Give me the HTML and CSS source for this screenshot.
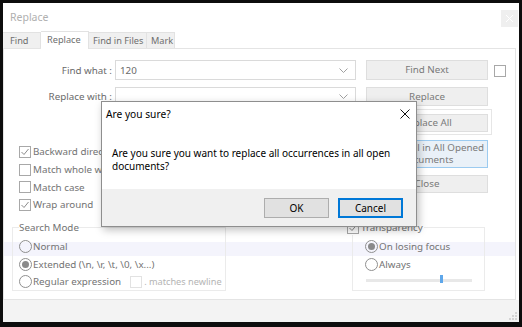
FILE: index.html
```html
<!DOCTYPE html>
<html lang="en">
<head>
    <meta charset="UTF-8">
    <title>Replace</title>
    <link rel="stylesheet" href="styles.css">
</head>
<body>

    <!-- Janela principal (esmaecida) -->
    <div class="window">
        <div class="titlebar">
            <span class="title">Replace</span>
            <span class="win-close">
                <svg width="7" height="7" viewBox="0 0 7 7"><path d="M0 0L7 7M7 0L0 7" stroke="#fff" stroke-width="1"/></svg>
            </span>
        </div>

        <div class="tabs">
            <span class="tab t-find">Find</span>
            <span class="tab t-replace active">Replace</span>
            <span class="tab t-files">Find in Files</span>
            <span class="tab t-mark">Mark</span>
        </div>

        <div class="panel">
            <div class="top">
                <div class="form">
                    <div class="field">
                        <label>Find what :</label>
                        <div class="combo">
                            <span>120</span>
                            <svg class="chev" width="9" height="5" viewBox="0 0 9 5"><path d="M0.5 0.5L4.5 4.5L8.5 0.5" fill="none" stroke="#a0a0a0"/></svg>
                        </div>
                    </div>
                    <div class="field field-2">
                        <label>Replace with :</label>
                        <div class="combo">
                            <span></span>
                            <svg class="chev" width="9" height="5" viewBox="0 0 9 5"><path d="M0.5 0.5L4.5 4.5L8.5 0.5" fill="none" stroke="#a0a0a0"/></svg>
                        </div>
                    </div>

                    <div class="options">
                        <div class="chk-row"><span class="chk on"><svg width="10" height="10" viewBox="0 0 10 10"><path d="M1.5 5L4 7.5L8.5 2" fill="none" stroke="#8c8c8c"/></svg></span>Backward direction</div>
                        <div class="chk-row"><span class="chk"></span>Match whole word only</div>
                        <div class="chk-row"><span class="chk"></span>Match case</div>
                        <div class="chk-row"><span class="chk on"><svg width="10" height="10" viewBox="0 0 10 10"><path d="M1.5 5L4 7.5L8.5 2" fill="none" stroke="#8c8c8c"/></svg></span>Wrap around</div>
                    </div>
                </div>

                <div class="buttons">
                    <div class="btn b-next">Find Next</div>
                    <div class="btn b-replace">Replace</div>
                    <div class="btn-frame">
                        <div class="btn b-all">Replace All</div>
                    </div>
                    <div class="btn b-opened">Replace All in All Opened<br>Documents</div>
                    <div class="btn b-close">Close</div>
                </div>

                <span class="chk side"></span>
            </div>

            <div class="bottom">
                <fieldset class="group mode">
                    <legend>Search Mode</legend>
                    <div class="radio-row"><span class="radio"></span>Normal</div>
                    <div class="radio-row"><span class="radio on"></span>Extended (\n, \r, \t, \0, \x...)</div>
                    <div class="radio-row"><span class="radio"></span>Regular expression<span class="chk newline"></span><span class="dim">. matches newline</span></div>
                </fieldset>

                <fieldset class="group transp">
                    <legend><span class="chk on"><svg width="10" height="10" viewBox="0 0 10 10"><path d="M1.5 5L4 7.5L8.5 2" fill="none" stroke="#8c8c8c"/></svg></span>Transparency</legend>
                    <div class="radio-row"><span class="radio on"></span>On losing focus</div>
                    <div class="radio-row"><span class="radio"></span>Always</div>
                    <div class="slider"><span class="thumb"></span></div>
                </fieldset>
            </div>
        </div>

        <div class="status">
            <svg class="grip" width="8" height="8" viewBox="0 0 8 8">
                <rect x="6" y="0" width="2" height="2" fill="#d4d4d4"/>
                <rect x="3" y="3" width="2" height="2" fill="#d4d4d4"/>
                <rect x="6" y="3" width="2" height="2" fill="#d4d4d4"/>
                <rect x="0" y="6" width="2" height="2" fill="#d4d4d4"/>
                <rect x="3" y="6" width="2" height="2" fill="#d4d4d4"/>
                <rect x="6" y="6" width="2" height="2" fill="#d4d4d4"/>
            </svg>
        </div>
    </div>

    <!-- Caixa de confirmação -->
    <div class="dialog">
        <div class="dlg-title">
            <span>Are you sure?</span>
            <svg class="dlg-x" width="10" height="10" viewBox="0 0 10 10"><path d="M0.5 0.5L9.5 9.5M9.5 0.5L0.5 9.5" stroke="#111" stroke-width="1"/></svg>
        </div>
        <div class="dlg-body">
            Are you sure you want to replace all occurrences in all open<br>documents?
        </div>
        <div class="dlg-footer">
            <div class="dlg-btn">OK</div>
            <div class="dlg-btn default">Cancel</div>
        </div>
    </div>

</body>
</html>
```

FILE: styles.css
```css
* {
    margin: 0;
    padding: 0;
    box-sizing: border-box;
    font-family: 'Noto Sans', sans-serif;
}

body {
    background-color: #0d0d0d;
    width: 522px;
    height: 327px;
    overflow: hidden;
}

/* Janela principal */
.window {
    margin: 3px 0 0 3px;
    width: 516px;
    height: 319px;
    background-color: #ffffff;
    display: flex;
    flex-direction: column;
    font-size: 9.8px;
    color: #737373;
}

.titlebar {
    height: 28px;
    display: flex;
    justify-content: space-between;
    align-items: flex-start;
}

.title {
    margin: 7px 0 0 7px;
    font-size: 10.5px;
    line-height: 14px;
    color: #b0b0b0;
}

.win-close {
    width: 17px;
    height: 17px;
    margin: 7px 1px 0 0;
    background-color: #efefef;
    display: flex;
    align-items: center;
    justify-content: center;
}

.tabs {
    height: 17px;
    display: flex;
    align-items: flex-end;
    position: relative;
    z-index: 1;
}

.tab {
    height: 16px;
    background-color: #f0f0f0;
    border: 1px solid #e2e2e2;
    border-bottom: none;
    border-left: none;
    line-height: 15px;
    font-size: 9.2px;
    color: #6e6e6e;
    white-space: nowrap;
    overflow: hidden;
}

.t-find { width: 38px; padding-left: 7px; }
.t-replace { width: 48px; padding-left: 6px; }
.t-files { width: 58px; padding-left: 4px; }
.t-mark { width: 28px; padding-left: 4px; }

.tab.active {
    height: 18px;
    margin-bottom: -1px;
    background-color: #ffffff;
    line-height: 16px;
}

.panel {
    height: 252px;
    margin-right: 3px;
    border: 1px solid #e4e4e4;
    background: linear-gradient(to bottom, #fff 193px, #f4f4fc 193px, #f4f4fc 207px, #fff 207px);
}

.top {
    display: flex;
    align-items: flex-start;
    padding-top: 11px;
}

.form {
    width: 352px;
}

.field {
    display: flex;
    height: 20px;
    align-items: center;
}

.field-2 {
    margin-top: 7px;
    height: 19px;
}

.field label {
    width: 108px;
    margin-right: 3px;
    text-align: right;
    color: #6a6a6a;
}

.combo {
    width: 241px;
    height: 100%;
    border: 1px solid #dadada;
    display: flex;
    align-items: center;
    justify-content: space-between;
    padding: 0 7px 0 4px;
    color: #6a6a6a;
}

.options {
    margin-top: 37px;
    padding-left: 15px;
}

.chk-row {
    height: 17.7px;
    display: flex;
    align-items: center;
    white-space: nowrap;
}

.chk {
    width: 12px;
    height: 12px;
    border: 1px solid #a8a8a8;
    background-color: #fff;
    margin-right: 2px;
    display: inline-flex;
    align-items: center;
    justify-content: center;
    flex-shrink: 0;
}

.buttons {
    width: 128px;
    margin-left: 8px;
    display: flex;
    flex-direction: column;
}

.btn {
    width: 122px;
    margin-left: 2px;
    background-color: #efefef;
    border: 1px solid #dedede;
    color: #7a7a7a;
    text-align: center;
    display: flex;
    align-items: center;
    justify-content: center;
    line-height: 12px;
}

.b-next { height: 20px; }
.b-replace { height: 19px; margin-top: 7px; }

.btn-frame {
    height: 26px;
    margin-top: 3px;
    border: 1px solid #e6e6e6;
    padding-top: 4px;
}

.btn-frame .btn {
    height: 18px;
    margin-left: 1px;
}

.b-opened {
    height: 28px;
    margin-top: 5px;
    border-color: #9ccbf0;
    background-color: #eaf1f8;
}

.b-close { height: 18px; margin-top: 7px; }

.chk.side {
    margin: 5px 0 0 2px;
}

/* Grupos de baixo */
.bottom {
    display: flex;
    margin-top: 7px;
    padding-left: 8px;
}

.group {
    border: 1px solid #ebebeb;
    padding: 0;
    min-width: 0;
}

.group legend {
    line-height: 14px;
    padding: 0;
    display: flex;
    align-items: center;
    white-space: nowrap;
}

.mode {
    width: 214px;
    padding-left: 6px;
}

.transp {
    width: 133px;
    margin-left: 126px;
    padding-left: 12px;
}

.transp legend {
    margin-left: -18px;
    padding-right: 1px;
}

.radio-row {
    height: 17.5px;
    display: flex;
    align-items: center;
    white-space: nowrap;
}

.group .radio-row:first-of-type {
    margin-top: 3px;
}

.radio {
    width: 13px;
    height: 13px;
    border: 1px solid #8f8f8f;
    border-radius: 50%;
    margin-right: 1px;
    display: inline-flex;
    align-items: center;
    justify-content: center;
    flex-shrink: 0;
}

.radio.on::after {
    content: '';
    width: 7px;
    height: 7px;
    border-radius: 50%;
    background-color: #8a8a8a;
}

.chk.newline {
    margin-left: 9px;
    border-color: #e2e2e2;
}

.dim {
    color: #b4b4b4;
    font-size: 9.2px;
}

.slider {
    width: 106px;
    height: 3px;
    margin: 6px 0 0 1px;
    background-color: #e8e8e8;
    position: relative;
}

.thumb {
    position: absolute;
    left: 74px;
    top: -4px;
    width: 3px;
    height: 8px;
    background-color: #5ea7ea;
}

.status {
    flex: 1;
    background-color: #f3f3f3;
    display: flex;
    justify-content: flex-end;
    align-items: flex-end;
    padding: 0 2px 2px 0;
}

/* Caixa de confirmação */
.dialog {
    position: absolute;
    left: 101px;
    top: 101px;
    width: 316px;
    height: 126px;
    background-color: #ffffff;
    border: 1px solid #8e8e8e;
    box-shadow: 2px 3px 8px rgba(0, 0, 0, 0.25);
    display: flex;
    flex-direction: column;
    color: #000;
    font-size: 10px;
}

.dlg-title {
    height: 24px;
    display: flex;
    justify-content: space-between;
    align-items: center;
    padding: 0 6px 0 4px;
    font-size: 10.2px;
}

.dlg-body {
    height: 63px;
    padding: 21px 0 0 10px;
    line-height: 12.5px;
}

.dlg-footer {
    flex: 1;
    background-color: #f0f0f0;
    display: flex;
    justify-content: flex-end;
    gap: 9px;
    padding: 9px 13px 0 0;
}

.dlg-btn {
    width: 65px;
    height: 20px;
    background-color: #e1e1e1;
    border: 1px solid #adadad;
    text-align: center;
    line-height: 18px;
}

.dlg-btn.default {
    border: 2px solid #0078d7;
    line-height: 16px;
}
```
